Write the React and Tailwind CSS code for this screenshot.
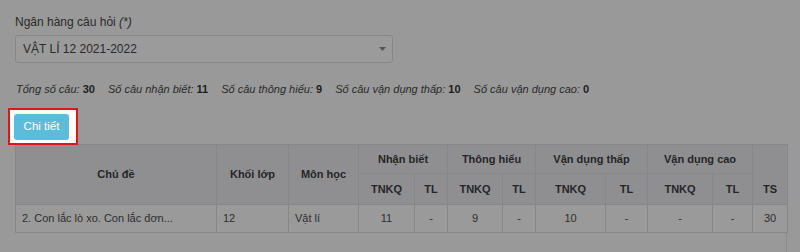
import React from "react";

const font = { fontFamily: '"Liberation Sans", Arial, sans-serif' };

function Th({ children, className = "", ...rest }) {
  return (
    <th
      {...rest}
      className={"border border-[#87878a] font-bold text-[11px] text-[#262626] text-center align-middle p-0 " + className}
    >
      {children}
    </th>
  );
}

function Td({ children, className = "" }) {
  return (
    <td className={"border border-[#87878a] text-[11px] text-[#2e2e2e] p-0 align-middle " + className}>
      {children}
    </td>
  );
}

export default function App() {
  const stats = [
    ["Tổng số câu:", "30"],
    ["Số câu nhận biết:", "11"],
    ["Số câu thông hiểu:", "9"],
    ["Số câu vận dụng thấp:", "10"],
    ["Số câu vận dụng cao:", "0"],
  ];
  return (
    <div style={font} className="w-[800px] h-[252px] bg-[#999999] overflow-hidden px-[15px] pt-[15px]">
      <div className="text-[12px] leading-[14px] text-[#2a2a2a]">
        Ngân hàng câu hỏi <i>(*)</i>
      </div>
      <div className="mt-[6px] w-[378px] h-[28px] border border-[#878787] rounded-[3px] bg-[#9b9b9b] flex items-center justify-between pl-[7px] pr-[6px]">
        <span className="text-[12px] text-[#2a2a2a]">VẬT LÍ 12 2021-2022</span>
        <svg width="7" height="4" viewBox="0 0 7 4"><path d="M0 0h7L3.5 4z" fill="#555" /></svg>
      </div>
      <div className="mt-[19px] flex gap-[13px] text-[11px] leading-[14px] text-[#2a2a2a] pl-[1px]">
        {stats.map(([l, v]) => (
          <span key={l}>
            <i>{l}</i> <b className="text-[#1e1e1e]">{v}</b>
          </span>
        ))}
      </div>
      <div className="mt-[12px] ml-[-7px] w-[70px] h-[37px] border-2 border-[#e0151b] bg-white flex items-center pl-[4px] relative z-10 mb-[-1px]">
        <div className="w-[55px] h-[26px] bg-[#5bbdd9] rounded-[3px] flex items-center justify-center text-white text-[11.5px]">
          Chi tiết
        </div>
      </div>
      <table className="border-collapse table-fixed w-[772px]">
        <colgroup>
          <col className="w-[201px]" />
          <col className="w-[72px]" />
          <col className="w-[70px]" />
          <col className="w-[56px]" />
          <col className="w-[33px]" />
          <col className="w-[55px]" />
          <col className="w-[33px]" />
          <col className="w-[70px]" />
          <col className="w-[42px]" />
          <col className="w-[65px]" />
          <col className="w-[40px]" />
          <col className="w-[35px]" />
        </colgroup>
        <thead className="bg-[#8f8f92]">
          <tr className="h-[29px]">
            <Th rowSpan={2}>Chủ đề</Th>
            <Th rowSpan={2}>Khối lớp</Th>
            <Th rowSpan={2}>Môn học</Th>
            <Th colSpan={2}>Nhận biết</Th>
            <Th colSpan={2}>Thông hiểu</Th>
            <Th colSpan={2}>Vận dụng thấp</Th>
            <Th colSpan={2}>Vận dụng cao</Th>
            <Th rowSpan={2} className="pt-[30px]">TS</Th>
          </tr>
          <tr className="h-[31px]">
            <Th>TNKQ</Th>
            <Th>TL</Th>
            <Th>TNKQ</Th>
            <Th>TL</Th>
            <Th>TNKQ</Th>
            <Th>TL</Th>
            <Th>TNKQ</Th>
            <Th>TL</Th>
          </tr>
        </thead>
        <tbody className="bg-[#9a9a9a]">
          <tr className="h-[28px]">
            <Td className="pl-[6px]">2. Con lắc lò xo. Con lắc đơn...</Td>
            <Td className="pl-[6px]">12</Td>
            <Td className="pl-[6px]">Vật lí</Td>
            <Td className="text-center">11</Td>
            <Td className="text-center">-</Td>
            <Td className="text-center">9</Td>
            <Td className="text-center">-</Td>
            <Td className="text-center">10</Td>
            <Td className="text-center">-</Td>
            <Td className="text-center">-</Td>
            <Td className="text-center">-</Td>
            <Td className="text-center">30</Td>
          </tr>
        </tbody>
      </table>
      <div className="w-[772px] h-[30px] border-r border-[#8c8c8c]" />
    </div>
  );
}
